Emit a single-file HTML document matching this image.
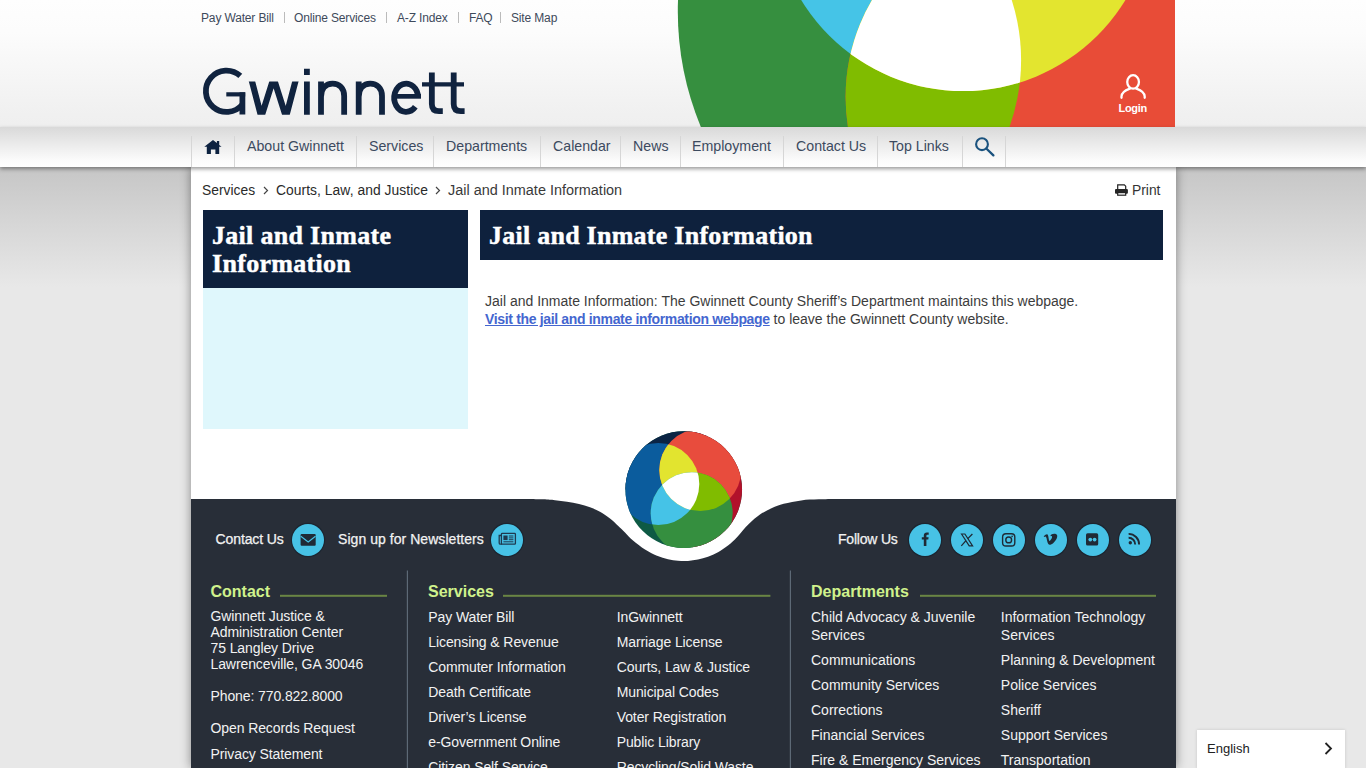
<!DOCTYPE html>
<html><head><meta charset="utf-8">
<style>
*{margin:0;padding:0;box-sizing:border-box}
html,body{width:1366px;height:768px;overflow:hidden}
body{position:relative;font-family:"Liberation Sans",sans-serif;background:#e8e8e8;color:#333}
.abs{position:absolute;white-space:nowrap}
#bggrad{position:absolute;left:0;top:167px;width:1366px;height:120px;background:linear-gradient(#c6c6c6,#e8e8e8)}
#header{position:absolute;left:0;top:0;width:1366px;height:127px;background:linear-gradient(#fefefe,#fcfcfc 25%,#f0f0f0 90%,#efefef)}
#nav{position:absolute;left:0;top:127px;width:1366px;height:40px;background:linear-gradient(#d9d9d9,#fcfcfc 85%,#fff);box-shadow:0 2px 4px rgba(0,0,0,.4)}
#container{position:absolute;left:191px;top:167px;width:985px;height:601px;background:#fff;box-shadow:0 0 10px rgba(0,0,0,.42)}
.toplinks{font-size:12px;color:#3e4a5b;top:11px;letter-spacing:-0.15px}
.sep{color:#bbb}
.navi{top:127px;height:40px;line-height:39px;font-size:14.2px;color:#3c4a5f}
.nsep{position:absolute;top:136px;width:1px;height:31px;background:#d6d6d6}
.bc{top:182px;font-size:13.85px;color:#2a2a2a}
.slab{font-family:"Liberation Serif",serif;font-weight:bold;color:#fff;-webkit-text-stroke:0.45px #fff}
.ft{color:#f2f2f2;font-size:14px;letter-spacing:-0.1px}
.fh{color:#d0f28c;font-weight:bold;font-size:16.5px}
.fline{position:absolute;height:2px;background:#66842c}
.circ{position:absolute;width:32px;height:32px;border-radius:50%;background:#47c2e6;top:524px;box-shadow:0 0 0 1.2px #1c2530}
</style></head><body>
<div id="bggrad"></div>
<div id="header"></div>
<!-- header graphic -->
<svg class="abs" style="left:0;top:0" width="1366" height="127" viewBox="0 0 1366 127">
  <defs>
    <clipPath id="cS"><circle cx="979" cy="11.4" r="301.2"/></clipPath>
    <clipPath id="hc"><rect x="0" y="0" width="1175" height="127"/></clipPath>
    <clipPath id="cG"><circle cx="822.9" cy="60.2" r="198.2"/></clipPath>
    <clipPath id="cQ"><circle cx="963.3" cy="-98.7" r="189.8"/></clipPath>
    <clipPath id="cR"><circle cx="1037.3" cy="97" r="191.7"/></clipPath>
  </defs>
  <g clip-path="url(#hc)"><g clip-path="url(#cS)">
    <rect x="600" y="0" width="600" height="127" fill="#368f3f"/>
    <rect x="600" y="0" width="600" height="127" fill="#e84c37" clip-path="url(#cR)"/>
    <g clip-path="url(#cG)"><circle cx="963.3" cy="-98.7" r="189.8" fill="#45c4e7"/><circle cx="1037.3" cy="97" r="191.7" fill="#80bc00"/></g>
    <g clip-path="url(#cR)"><circle cx="963.3" cy="-98.7" r="189.8" fill="#e3e52f"/></g>
    <g clip-path="url(#cR)"><g clip-path="url(#cG)"><circle cx="963.3" cy="-98.7" r="189.8" fill="#fff"/></g></g>
  </g></g>
</svg>

<!-- login -->
<svg class="abs" style="left:1100px;top:60px" width="60" height="60" viewBox="1100 60 60 60">
  <ellipse cx="1133.1" cy="81.9" rx="5.85" ry="6.7" fill="none" stroke="#fff" stroke-width="2.3"/>
  <path d="M1121.5,97.8 V96.5 C1121.5,92.8 1125,90.4 1129.8,88.6 M1144.7,97.8 V96.5 C1144.7,92.8 1141.2,90.4 1136.4,88.6" fill="none" stroke="#fff" stroke-width="2.3" stroke-linecap="round"/>
</svg>
<div class="abs" style="left:1118.5px;top:101.5px;font-size:11px;line-height:12px;font-weight:bold;color:#fff;letter-spacing:-0.3px">Login</div>
<!-- top links -->
<div class="abs toplinks" style="left:201px">Pay Water Bill</div>
<div class="abs toplinks" style="left:294px">Online Services</div>
<div class="abs toplinks" style="left:397px">A-Z Index</div>
<div class="abs toplinks" style="left:469px">FAQ</div>
<div class="abs toplinks" style="left:511px">Site Map</div>
<div class="abs" style="left:284px;top:12px;width:1px;height:11px;background:#bbb"></div>
<div class="abs" style="left:386px;top:12px;width:1px;height:11px;background:#bbb"></div>
<div class="abs" style="left:458px;top:12px;width:1px;height:11px;background:#bbb"></div>
<div class="abs" style="left:500px;top:12px;width:1px;height:11px;background:#bbb"></div>
<!-- logo text -->
<svg class="abs" style="left:0;top:0" width="480" height="127" viewBox="0 0 480 127">
<defs><clipPath id="wc"><rect x="240" y="81.5" width="70" height="33.3"/></clipPath></defs>
<g fill="none" stroke="#10233f" stroke-width="5.8">
<path d="M240.3,75.9 A20.65,20.65 0 1 0 242.4,104.5"/>
<path d="M242.4,92.3 V114.5"/>
<path d="M226.3,94.35 H245.2" stroke-width="4.2"/>
<polyline clip-path="url(#wc)" points="250.6,76 261.3,117 273.6,78 286,117 296.8,76" stroke-width="6.2" stroke-linejoin="miter" stroke-miterlimit="10"/>
<path d="M306.9,81.5 V114.8 M306.9,68.7 V74.9"/>
<path d="M321,114.8 V81.5 M321,97 C321,88 326,83.6 332.6,83.6 C339,83.6 344.15,88 344.15,96 V114.8"/>
<path d="M358.7,114.8 V81.5 M358.7,97 C358.7,88 363.7,83.6 370.3,83.6 C376.7,83.6 382,88 382,96 V114.8"/>
<path d="M418.1,97.7 A11.95,14.1 0 1 0 415.3,106.8"/>
<path d="M394,96.35 H421" stroke-width="4.7"/>
<path d="M431.85,72.5 V104 Q431.85,111.2 439,111.2 H442.8"/>
<path d="M453.7,72.5 V104 Q453.7,111.2 460.8,111.2 H464.6"/>
<path d="M422,84.4 H464" stroke-width="4.2"/>
</g></svg>
<!-- nav -->
<div id="container"></div>
<div id="nav"></div>
<div class="nsep" style="left:191px"></div>
<div class="nsep" style="left:234px"></div>
<div class="nsep" style="left:356px"></div>
<div class="nsep" style="left:433px"></div>
<div class="nsep" style="left:540px"></div>
<div class="nsep" style="left:620px"></div>
<div class="nsep" style="left:680px"></div>
<div class="nsep" style="left:783px"></div>
<div class="nsep" style="left:877px"></div>
<div class="nsep" style="left:962px"></div>
<div class="nsep" style="left:1005px"></div>
<svg class="abs" style="left:200px;top:136px" width="26" height="22" viewBox="200 136 26 22"><path d="M213,140 L204.3,146.8 H206.8 V154 H210.9 V149.6 H215.4 V154 H219.2 V146.8 H221.6 L219.2,144.9 V141 H216.9 V143.1 Z" fill="#0d2240"/></svg>
<div class="abs navi" style="left:247px">About Gwinnett</div>
<div class="abs navi" style="left:369px">Services</div>
<div class="abs navi" style="left:446px">Departments</div>
<div class="abs navi" style="left:553px">Calendar</div>
<div class="abs navi" style="left:633px">News</div>
<div class="abs navi" style="left:692px">Employment</div>
<div class="abs navi" style="left:796px">Contact Us</div>
<div class="abs navi" style="left:889px">Top Links</div>
<svg class="abs" style="left:970px;top:132px" width="30" height="30" viewBox="970 132 30 30"><circle cx="982" cy="144.2" r="5.9" fill="none" stroke="#1a527e" stroke-width="2.1"/><path d="M986.3,148.5 L993.4,155.4" stroke="#1a527e" stroke-width="2.3" stroke-linecap="round"/></svg>

<!-- breadcrumb -->
<div class="abs bc" style="left:202px">Services</div>
<svg class="abs" style="left:263px;top:186px" width="6" height="9" viewBox="0 0 6 9"><path d="M1,1 L4.5,4.5 L1,8" fill="none" stroke="#444" stroke-width="1.2"/></svg>
<div class="abs bc" style="left:276px;letter-spacing:0.05px">Courts, Law, and Justice</div>
<svg class="abs" style="left:435px;top:186px" width="6" height="9" viewBox="0 0 6 9"><path d="M1,1 L4.5,4.5 L1,8" fill="none" stroke="#444" stroke-width="1.2"/></svg>
<div class="abs bc" style="left:448px;font-size:14.45px;top:181.5px;color:#3a3a3a">Jail and Inmate Information</div>
<svg class="abs" style="left:1110px;top:180px" width="22" height="20" viewBox="1110 180 22 20"><path d="M1117.7,189.3 V184.8 H1124.3 L1125.7,186.2 V189.3" fill="#fff" stroke="#222" stroke-width="1.2"/><rect x="1115" y="188.9" width="12.9" height="4.8" rx="1" fill="#262626"/><rect x="1117.7" y="192.6" width="8" height="2.6" fill="#fff" stroke="#222" stroke-width="1.2"/></svg>
<div class="abs bc" style="left:1132px;color:#333">Print</div>
<!-- sidebar -->
<div class="abs" style="left:203px;top:210px;width:265px;height:78px;background:#0e213d"></div>
<div class="abs" style="left:203px;top:288px;width:265px;height:141px;background:#dff7fc"></div>
<div class="abs slab" style="left:212px;top:222px;font-size:26px;line-height:27.8px;letter-spacing:0.3px">Jail and Inmate<br>Information</div>
<!-- main heading -->
<div class="abs" style="left:480px;top:210px;width:683px;height:50px;background:#0e213d"></div>
<div class="abs slab" style="left:489px;top:221px;font-size:26px;line-height:30px;letter-spacing:0.25px">Jail and Inmate Information</div>
<div class="abs" style="left:485px;top:292px;font-size:14px;line-height:18px;color:#3c3c3c">Jail and Inmate Information: The Gwinnett County Sheriff&rsquo;s Department maintains this webpage.<br><b style="color:#4466cf;text-decoration:underline;letter-spacing:-0.34px">Visit the jail and inmate information webpage</b> to leave the Gwinnett County website.</div>

<!-- footer -->
<svg class="abs" style="left:0;top:0" width="1366" height="768" viewBox="0 0 1366 768">
<path d="M191,499 H520 C530.5,499.1 537.2,499.1 543.0,499.3 C548.8,499.5 551.0,499.8 555.0,500.2 C559.0,500.6 563.0,501.1 567.0,501.7 C571.0,502.3 575.2,503.1 579.0,504.0 C582.8,504.9 586.5,506.0 590.0,507.3 C593.5,508.6 596.7,509.9 600.0,511.8 C603.3,513.7 607.0,516.2 610.0,518.5 C613.0,520.8 615.5,523.4 618.0,525.8 C620.5,528.1 622.5,530.1 625.0,532.6 C627.5,535.1 629.7,537.8 633.0,540.6 C636.3,543.4 641.0,547.1 645.0,549.6 C649.0,552.1 653.2,554.2 657.0,555.8 C660.8,557.4 664.5,558.4 668.0,559.2 C671.5,560.1 674.7,560.5 678.0,560.8 C681.3,561.0 684.7,561.1 688.0,560.9 C691.3,560.7 694.7,560.2 698.0,559.6 C701.3,558.9 704.7,558.0 708.0,556.8 C711.3,555.5 714.7,554.1 718.0,552.2 C721.3,550.4 724.8,548.1 728.0,545.6 C731.2,543.1 733.6,540.7 737.0,537.2 C740.4,533.6 744.6,528.1 748.5,524.3 C752.4,520.5 756.4,517.0 760.3,514.3 C764.2,511.6 768.1,509.8 772.0,508.0 C775.9,506.2 778.8,505.1 783.7,503.8 C788.6,502.5 795.4,501.1 801.2,500.4 C807.1,499.6 812.3,499.5 818.8,499.3 C825.3,499.1 829.8,499.1 840.0,499.0 H1176 V768 H191 Z" fill="#282e38"/>
<defs>
<clipPath id="sph"><circle cx="683.75" cy="489.6" r="58.3"/></clipPath>
<clipPath id="lb"><circle cx="658.3" cy="484" r="41"/></clipPath>
<clipPath id="lr"><circle cx="700.3" cy="470" r="41"/></clipPath>
<clipPath id="lg"><circle cx="691.7" cy="513.2" r="41"/></clipPath>
</defs>
<g clip-path="url(#sph)">
<rect x="620" y="425" width="130" height="130" fill="#0e5a44"/>
<path d="M683.75,489.6 L560,489.6 L560,360 L740,360 Z" fill="#0b2444"/>
<path d="M683.75,489.6 L700,360 L800,360 L800,600 L700,600 Z" fill="#b2112b"/>
<circle cx="658.3" cy="484" r="41" fill="#0b5c9d"/>
<circle cx="700.3" cy="470" r="41" fill="#e84c3d"/>
<circle cx="691.7" cy="513.2" r="41" fill="#358f3f"/>
<g clip-path="url(#lb)"><circle cx="700.3" cy="470" r="41" fill="#e2e42f"/><circle cx="691.7" cy="513.2" r="41" fill="#45c3e7"/></g>
<g clip-path="url(#lr)"><circle cx="691.7" cy="513.2" r="41" fill="#80bc00"/></g>
<g clip-path="url(#lb)"><g clip-path="url(#lr)"><circle cx="691.7" cy="513.2" r="41" fill="#fff"/></g></g>
</g>
</svg>
<!-- footer content -->
<div class="abs ft" style="left:215.5px;top:531.1px;font-size:14px;line-height:16.10px;-webkit-text-stroke:0.25px #f2f2f2;letter-spacing:-0.1px">Contact Us</div>
<div class="abs ft" style="-webkit-text-stroke:0.25px #f2f2f2;letter-spacing:0.05px;left:338px;top:531.1px;font-size:14px;line-height:16.10px;">Sign up for Newsletters</div>
<div class="abs ft" style="-webkit-text-stroke:0.25px #f2f2f2;letter-spacing:-0.2px;left:838px;top:531.1px;font-size:14px;line-height:16.10px;">Follow Us</div>
<div class="circ" style="left:292px"></div>
<div class="circ" style="left:491px"></div>
<div class="circ" style="left:909px"></div>
<div class="circ" style="left:951px"></div>
<div class="circ" style="left:993px"></div>
<div class="circ" style="left:1035px"></div>
<div class="circ" style="left:1077px"></div>
<div class="circ" style="left:1119px"></div>
<svg class="abs" style="left:0;top:0" width="1366" height="768" viewBox="0 0 1366 768">
<g fill="#1f2a36">
<rect x="300.6" y="534" width="15.1" height="11.8" rx="1"/>
</g>
<path d="M300.8,536.2 L308.2,542 L315.5,536.2" fill="none" stroke="#47c2e6" stroke-width="1.1"/>
<g fill="none" stroke="#1f3a50" stroke-width="1.3">
<rect x="501.4" y="533.4" width="14" height="10.8" rx="0.8"/>
<path d="M501.4,535.5 H499.2 V543 Q499.2,544.2 500.4,544.2 H502"/>
</g>
<g fill="#1f3a50">
<rect x="503.4" y="535.5" width="4.2" height="4.6"/>
<rect x="508.8" y="535.5" width="4.6" height="1"/>
<rect x="508.8" y="537.4" width="4.6" height="1"/>
<rect x="508.8" y="539.2" width="4.6" height="1"/>
<rect x="503.4" y="541.3" width="10" height="1"/>
</g>
<!-- facebook -->
<path d="M926.4,546 V539.6 H928.3 L928.6,537.3 H926.4 V535.9 C926.4,535.2 926.7,534.7 927.6,534.7 H928.7 V532.5 C928.4,532.5 927.6,532.4 926.8,532.4 C925,532.4 923.8,533.5 923.8,535.5 V537.3 H921.8 V539.6 H923.8 V546 Z" fill="#1f2a36"/>
<!-- X -->
<g fill="none" stroke="#1f2a36" stroke-width="1.2"><path d="M961.5,534 L969.2,545.9 H972.6 L964.9,534 Z"/><path d="M961.3,545.9 L966,540.6 M967.8,538.6 L972.4,534" stroke-width="1.3"/></g>
<!-- instagram -->
<rect x="1002.6" y="533.8" width="12.2" height="12.2" rx="3.3" fill="none" stroke="#1f2a36" stroke-width="1.4"/>
<circle cx="1008.7" cy="539.9" r="2.9" fill="none" stroke="#1f2a36" stroke-width="1.4"/>
<circle cx="1012.1" cy="536.4" r="0.8" fill="#1f2a36"/>
<!-- vimeo -->
<path d="M1043.7,536.3 C1045,535 1046.3,534.1 1047,534.2 C1048,534.4 1048.2,535.5 1048.5,537.5 C1048.8,539.6 1049.1,541 1049.6,541 C1050.2,541 1051.8,538.6 1052,537.6 C1052.3,536 1051.5,535.6 1050.3,536.2 C1051,533.6 1054.2,533.4 1055.9,534 C1057.6,534.7 1057.6,536.6 1056.7,538.5 C1055.5,541 1052.4,544.6 1050.2,544.8 C1048.4,545 1047.8,543.6 1047.3,541.6 C1046.8,539.6 1046.4,536.9 1045.6,536.6 C1045.1,536.4 1044.4,537 1044.2,537.1 Z" fill="#1f2a36"/>
<!-- flickr -->
<rect x="1086" y="533.3" width="12.2" height="12.3" rx="1.6" fill="#1f2a36"/>
<circle cx="1090.3" cy="539.6" r="1.9" fill="#47c2e6"/>
<circle cx="1094.6" cy="539.6" r="1.9" fill="#47c2e6"/>
<!-- rss -->
<circle cx="1130.3" cy="542.8" r="1.7" fill="#1f2a36"/>
<path d="M1128.6,537.8 A6.6,6.6 0 0 1 1135.2,544.5 M1128.6,533.9 A10.5,10.5 0 0 1 1139.1,544.5" fill="none" stroke="#1f2a36" stroke-width="1.9"/>
<!-- separators and lines -->
<rect x="406.8" y="570.5" width="1.2" height="198" fill="#5d6976"/>
<rect x="789.8" y="570.5" width="1.2" height="198" fill="#5d6976"/>
<rect x="280" y="594.8" width="107" height="2" fill="#6a8544"/>
<rect x="503" y="594.8" width="267.4" height="2" fill="#6a8544"/>
<rect x="920" y="594.8" width="236" height="2" fill="#6a8544"/>
</svg>
<div class="abs fh" style="left:210.5px;top:582.8px;font-size:16px;line-height:18.40px">Contact</div>
<div class="abs fh" style="left:428px;top:583.2px;font-size:16px;line-height:18.40px">Services</div>
<div class="abs fh" style="left:811px;top:582.5px;font-size:16px;line-height:18.40px">Departments</div>
<div class="abs ft" style="left:210.5px;top:607.8px;font-size:14px;line-height:16.10px;">Gwinnett Justice &amp;</div>
<div class="abs ft" style="left:210.5px;top:623.8px;font-size:14px;line-height:16.10px;">Administration Center</div>
<div class="abs ft" style="left:210.5px;top:639.8px;font-size:14px;line-height:16.10px;">75 Langley Drive</div>
<div class="abs ft" style="left:210.5px;top:655.8px;font-size:14px;line-height:16.10px;">Lawrenceville, GA 30046</div>
<div class="abs ft" style="left:210.5px;top:687.9px;font-size:14px;line-height:16.10px;">Phone: 770.822.8000</div>
<div class="abs ft" style="left:210.5px;top:720px;font-size:14px;line-height:16.10px;">Open Records Request</div>
<div class="abs ft" style="left:210.5px;top:746.1px;font-size:14px;line-height:16.10px;">Privacy Statement</div>
<div class="abs ft" style="left:428.3px;top:608.9px;font-size:14px;line-height:16.10px;">Pay Water Bill</div>
<div class="abs ft" style="left:428.3px;top:633.9px;font-size:14px;line-height:16.10px;">Licensing &amp; Revenue</div>
<div class="abs ft" style="left:428.3px;top:658.9px;font-size:14px;line-height:16.10px;">Commuter Information</div>
<div class="abs ft" style="left:428.3px;top:683.9px;font-size:14px;line-height:16.10px;">Death Certificate</div>
<div class="abs ft" style="left:428.3px;top:708.9px;font-size:14px;line-height:16.10px;">Driver&rsquo;s License</div>
<div class="abs ft" style="left:428.3px;top:733.9px;font-size:14px;line-height:16.10px;">e-Government Online</div>
<div class="abs ft" style="left:428.3px;top:758.9px;font-size:14px;line-height:16.10px;">Citizen Self Service</div>
<div class="abs ft" style="left:616.7px;top:608.9px;font-size:14px;line-height:16.10px;">InGwinnett</div>
<div class="abs ft" style="left:616.7px;top:633.9px;font-size:14px;line-height:16.10px;">Marriage License</div>
<div class="abs ft" style="left:616.7px;top:658.9px;font-size:14px;line-height:16.10px;">Courts, Law &amp; Justice</div>
<div class="abs ft" style="left:616.7px;top:683.9px;font-size:14px;line-height:16.10px;">Municipal Codes</div>
<div class="abs ft" style="left:616.7px;top:708.9px;font-size:14px;line-height:16.10px;">Voter Registration</div>
<div class="abs ft" style="left:616.7px;top:733.9px;font-size:14px;line-height:16.10px;">Public Library</div>
<div class="abs ft" style="left:616.7px;top:758.9px;font-size:14px;line-height:16.10px;">Recycling/Solid Waste</div>
<div class="abs ft" style="left:811px;top:608.7px;letter-spacing:0;font-size:14px;line-height:16.10px;">Child Advocacy &amp; Juvenile</div>
<div class="abs ft" style="left:811px;top:626.9px;letter-spacing:0;font-size:14px;line-height:16.10px;">Services</div>
<div class="abs ft" style="left:811px;top:652.2px;letter-spacing:0;font-size:14px;line-height:16.10px;">Communications</div>
<div class="abs ft" style="left:811px;top:677.0px;letter-spacing:0;font-size:14px;line-height:16.10px;">Community Services</div>
<div class="abs ft" style="left:811px;top:701.9px;letter-spacing:0;font-size:14px;line-height:16.10px;">Corrections</div>
<div class="abs ft" style="left:811px;top:726.8px;letter-spacing:0;font-size:14px;line-height:16.10px;">Financial Services</div>
<div class="abs ft" style="left:811px;top:751.7px;letter-spacing:0;font-size:14px;line-height:16.10px;">Fire &amp; Emergency Services</div>
<div class="abs ft" style="left:1000.8px;top:608.7px;letter-spacing:0;font-size:14px;line-height:16.10px;">Information Technology</div>
<div class="abs ft" style="left:1000.8px;top:626.9px;letter-spacing:0;font-size:14px;line-height:16.10px;">Services</div>
<div class="abs ft" style="left:1000.8px;top:652.2px;letter-spacing:0;font-size:14px;line-height:16.10px;">Planning &amp; Development</div>
<div class="abs ft" style="left:1000.8px;top:677.0px;letter-spacing:0;font-size:14px;line-height:16.10px;">Police Services</div>
<div class="abs ft" style="left:1000.8px;top:701.9px;letter-spacing:0;font-size:14px;line-height:16.10px;">Sheriff</div>
<div class="abs ft" style="left:1000.8px;top:726.8px;letter-spacing:0;font-size:14px;line-height:16.10px;">Support Services</div>
<div class="abs ft" style="left:1000.8px;top:751.7px;letter-spacing:0;font-size:14px;line-height:16.10px;">Transportation</div>
<!-- english widget -->
<div class="abs" style="left:1197px;top:729.5px;width:148px;height:39px;background:#fff;box-shadow:0 0 3px rgba(0,0,0,.15)"></div>
<div class="abs" style="left:1207px;top:741.4px;font-size:13px;line-height:14.95px;color:#222;margin-top:1px">English</div>
<svg class="abs" style="left:1322px;top:741px" width="12" height="15" viewBox="0 0 12 15"><path d="M3.5,2 L9,7.5 L3.5,13" fill="none" stroke="#222" stroke-width="1.8"/></svg>
</body></html>
